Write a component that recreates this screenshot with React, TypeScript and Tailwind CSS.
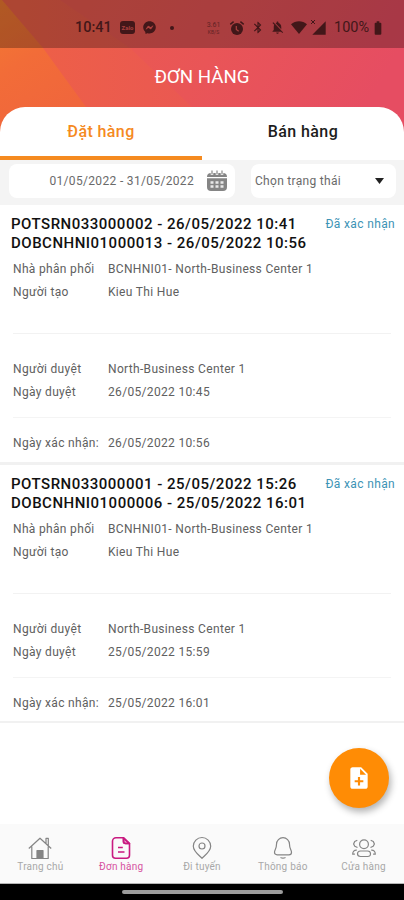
import type { ReactNode } from "react";
import {
  MdBatteryFull,
  MdBluetooth,
  MdNoteAdd,
  MdNotificationsOff,
  MdSignalCellular4Bar,
} from "react-icons/md";
import { FaFacebookMessenger } from "react-icons/fa";

type Order = {
  code: string;
  createdAt: string;
  deliveryCode: string;
  confirmedAt: string;
  distributor: string;
  creator: string;
  approver: string;
  approvedAt: string;
};

const ORDERS: Order[] = [
  {
    code: "POTSRN033000002",
    createdAt: "26/05/2022 10:41",
    deliveryCode: "DOBCNHNI01000013",
    confirmedAt: "26/05/2022 10:56",
    distributor: "BCNHNI01- North-Business Center 1",
    creator: "Kieu Thi Hue",
    approver: "North-Business Center 1",
    approvedAt: "26/05/2022 10:45",
  },
  {
    code: "POTSRN033000001",
    createdAt: "25/05/2022 15:26",
    deliveryCode: "DOBCNHNI01000006",
    confirmedAt: "25/05/2022 16:01",
    distributor: "BCNHNI01- North-Business Center 1",
    creator: "Kieu Thi Hue",
    approver: "North-Business Center 1",
    approvedAt: "25/05/2022 15:59",
  },
];

function AlarmIcon() {
  return (
    <svg viewBox="0 0 16 16" className="ml-[7px] h-4 w-4" fill="none" stroke="currentColor">
      <circle cx="8" cy="9" r="6" fill="currentColor" stroke="none" />
      <path d="M1.3 4.3 4.6 1.6M14.7 4.3l-3.3-2.7" strokeWidth="1.5" />
      <path d="M7.3 6v3.4l2.4 1.8" stroke="#a9403f" strokeWidth="1.2" />
    </svg>
  );
}

function StatusBar() {
  return (
    <div className="flex h-12 items-center bg-black/27 pt-[7px] pl-[75px] text-[15px] text-[#421719]">
      <span className="w-[45px] text-[14.5px] font-medium">10:41</span>
      <span className="flex h-[13px] w-[15px] items-center justify-center rounded-[3px] bg-[#421719] text-[6px] font-bold text-[#a9403f]">
        Zalo
      </span>
      <FaFacebookMessenger className="ml-2 h-[13px] w-[13px]" />
      <span className="ml-[14px] h-1 w-1 rounded-full bg-[#421719]" />
      <span className="ml-[31px] flex w-[17px] flex-col items-center text-[7px] opacity-70">
        <span className="leading-[8px]">3.61</span>
        <span className="text-[5px] leading-[6px]">KB/S</span>
      </span>
      <AlarmIcon />
      <MdBluetooth className="ml-[6px] h-[15px] w-[14px]" />
      <MdNotificationsOff className="ml-[5px] h-[15px] w-[15px]" />
      <svg viewBox="0 0 16 13" className="ml-[6px] h-[13px] w-4 fill-current">
        <path d="M0 3.2C4.5-.7 11.5-.7 16 3.2L8 13Z" />
      </svg>
      <span className="relative ml-1">
        <MdSignalCellular4Bar className="h-4 w-4" />
        <svg viewBox="0 0 4 4" className="absolute top-0 left-0 h-1 w-1 stroke-current">
          <path d="M0 0l4 4M4 0L0 4" />
        </svg>
      </span>
      <span className="ml-[7px] w-[36px] text-[14.5px]">100%</span>
      <MdBatteryFull className="h-4 w-4" />
    </div>
  );
}

function HeaderBackdrop() {
  return (
    <svg viewBox="0 0 404 136" preserveAspectRatio="none" className="absolute inset-0 -z-10 h-[136px] w-full">
      <defs>
        <linearGradient id="base" gradientUnits="userSpaceOnUse" x1="90" y1="0" x2="340" y2="150">
          <stop offset="0" stopColor="#eb5a4f" />
          <stop offset="0.45" stopColor="#e95557" />
          <stop offset="1" stopColor="#e64d62" />
        </linearGradient>
        <linearGradient id="band" x1="0" y1="0" x2="1" y2="0">
          <stop offset="0" stopColor="#ee6145" />
          <stop offset="1" stopColor="#ea5852" />
        </linearGradient>
        <linearGradient id="corner" gradientUnits="userSpaceOnUse" x1="0" y1="0" x2="70" y2="107">
          <stop offset="0" stopColor="#f37b31" />
          <stop offset="0.5" stopColor="#f26c38" />
          <stop offset="1" stopColor="#f0663c" />
        </linearGradient>
      </defs>
      <rect width="404" height="136" fill="url(#base)" />
      <path d="M0 0H60L130 48L192 107V136H0Z" fill="url(#band)" />
      <path d="M0 0H2L43 48L86 107V136H0Z" fill="url(#corner)" />
    </svg>
  );
}

function Field({ label, children }: { label: string; children: ReactNode }) {
  return (
    <div className="flex h-[23.5px] items-center text-[12px] tracking-[0.33px] whitespace-nowrap text-[#606060]">
      <span className="w-[95px] shrink-0">{label}</span>
      <span>{children}</span>
    </div>
  );
}

function OrderCard({ order }: { order: Order }) {
  return (
    <article className="h-[260px] border-b-[3px] border-[#f1f1f1] bg-white pt-[10px] last:h-[258px] last:border-b-2">
      <div className="flex justify-between pr-[9px] pl-[11px]">
        <h2 className="text-[15px] leading-[19px] font-medium tracking-[0.5px] whitespace-nowrap text-[#111]">
          {order.code} - {order.createdAt}
          <br />
          {order.deliveryCode} - {order.confirmedAt}
        </h2>
        <span className="text-[12px] leading-[19px] tracking-[0.35px] whitespace-nowrap text-[#3c93b5]">Đã xác nhận</span>
      </div>
      <div className="mt-1 px-[13px]">
        <Field label="Nhà phân phối">{order.distributor}</Field>
        <Field label="Người tạo">{order.creator}</Field>
        <div className="mt-[29px] mb-[23px] h-px bg-[#f2f2f2]" />
        <Field label="Người duyệt">{order.approver}</Field>
        <Field label="Ngày duyệt">{order.approvedAt}</Field>
        <div className="mt-[13px] mb-[13px] h-px bg-[#f4f4f4]" />
        <Field label="Ngày xác nhận:">{order.confirmedAt}</Field>
      </div>
    </article>
  );
}

function CalendarIcon() {
  return (
    <svg viewBox="0 0 20 22" className="h-[22px] w-5">
      <path d="M4 3h12a4 4 0 0 1 4 4H0a4 4 0 0 1 4-4Z" fill="#858585" />
      <path d="M0 8.3h20V17a4 4 0 0 1-4 4H4a4 4 0 0 1-4-4Z" fill="#858585" />
      <path d="M5 .8v4M10 .8v4M15 .8v4" stroke="#fff" strokeWidth="2.6" />
      <path d="M5 .6v3.4M10 .6v3.4M15 .6v3.4" stroke="#858585" strokeWidth="1.2" />
      <path d="M3.5 12.5h13M3.5 16.5h13" stroke="#e9e9e9" strokeWidth="2.3" strokeDasharray="3 2" />
    </svg>
  );
}

const NAV_ITEMS = [
  {
    label: "Trang chủ",
    icon: (
      <>
        <path d="M.8 12.5 12 2.2l11.2 10.3M18 7.5V2.3h2.3v7.4M3.8 10.5V22.5h16.4V10.5" />
        <path d="M9 22.3v-7.8h6v7.8Z" fill="currentColor" />
      </>
    ),
  },
  {
    label: "Đơn hàng",
    icon: (
      <>
        <path d="M14.5 1.8H7a3.5 3.5 0 0 0-3.5 3.5v13.9A3 3 0 0 0 6.500 22.200h11a3 3 0 0 0 3-3V7.500ZM14.500 1.800v3.700a2 2 0 0 0 2 2h4M9 11.500h4.800M9 16h6.500" />
        <path d="m14.500 1.800 6 5.700h-4a2 2 0 0 1-2-2Z" fillOpacity="0.35" fill="currentColor" />
      </>
    ),
    active: true,
  },
  {
    label: "Đi tuyến",
    icon: (
      <>
        <path d="M12 22.300C8.300 18.700 3.300 15 3.300 10.200a8.700 8.700 0 0 1 17.400 0c0 4.800-5 8.500-8.700 12.100Z" />
        <circle cx="12" cy="10" r="3" />
      </>
    ),
  },
  {
    label: "Thông báo",
    icon: (
      <>
        <path d="M5.500 8.200a6.500 6.500 0 0 1 13 0c0 5 2 5.700 2 8 0 1.800-1.100 2.600-2.600 2.600H6.100c-1.500 0-2.600-.8-2.600-2.600 0-2.300 2-3 2-8Z" />
        <path d="M9.500 21.500q2.500 1.200 5 0" />
      </>
    ),
  },
  {
    label: "Cửa hàng",
    icon: (
      <>
        <circle cx="12" cy="8.300" r="4.400" />
        <path d="M8.500 15h7q3 0 3 2.800t-3 2.700h-7q-3 0-3-2.700T8.500 15Z" />
        <path d="M5.300 4.300 2.700 5.500 1.600 8l1.200 2.300 2.700 1.200M18.700 4.300l2.600 1.200L22.400 8l-1.200 2.300-2.700 1.200" />
        <path d="M4.800 14.200Q.7 14 .7 18.200h2.200M19.200 14.200q4.100-.2 4.100 4h-2.200" />
      </>
    ),
  },
];

function BottomNav() {
  return (
    <nav className="grid h-[60px] grid-cols-5 border-b border-[#b5b5b5] bg-[#fafafa]">
      {NAV_ITEMS.map((item) => (
        <div
          key={item.label}
          className={`flex flex-col items-center pt-[11.5px] ${item.active ? "text-[#c91a80]" : "text-[#858585]"}`}
        >
          <svg
            viewBox="0 0 24 24"
            fill="none"
            stroke="currentColor"
            strokeWidth={item.active ? 1.6 : 1.2}
            strokeLinejoin="round"
            className="h-6 w-6"
          >
            {item.icon}
          </svg>
          <span className={`text-[10px] leading-[14px] tracking-[0.22px] ${item.active ? "text-[#d652a0]" : "text-[#a8a8a8]"}`}>
            {item.label}
          </span>
        </div>
      ))}
    </nav>
  );
}

export default function App() {
  return (
    <div className="relative isolate flex h-[900px] w-[404px] flex-col overflow-hidden font-[Roboto,sans-serif]">
      <HeaderBackdrop />
      <StatusBar />
      <header className="flex h-[59px] items-center justify-center text-[18.7px] text-white">ĐƠN HÀNG</header>

      <main className="flex-1 overflow-hidden rounded-t-[25px] bg-white">
        <div className="grid h-[53px] grid-cols-2 text-center text-[16px] leading-[50px] font-medium tracking-[0.4px]">
          <div className="h-[53px] border-b-[4px] border-[#f58a1f] text-[#f58a1f]">Đặt hàng</div>
          <div className="text-[#1c1c1c]">Bán hàng</div>
        </div>

        <div className="flex h-[45px] gap-4 bg-[#f4f4f4] pt-1 pr-2 pl-[9px]">
          <div className="flex h-[34px] w-[226px] items-center justify-end rounded-lg bg-white pr-[8px] text-[12px] text-[#6a6a6a]">
            <span className="mr-[13px] tracking-[0.33px] whitespace-nowrap">01/05/2022 - 31/05/2022</span>
            <CalendarIcon />
          </div>
          <div className="flex h-[34px] flex-1 items-center justify-between rounded-lg bg-white pr-[12px] pl-1 text-[12px] tracking-[0.3px] text-[#6a6a6a]">
            Chọn trạng thái
            <svg viewBox="0 0 9 6" className="h-[6px] w-[9px] fill-[#222]">
              <path d="M0 0h9L4.500 6Z" />
            </svg>
          </div>
        </div>

        {ORDERS.map((order) => (
          <OrderCard key={order.code} order={order} />
        ))}
      </main>

      <button
        type="button"
        aria-label="Tạo đơn hàng"
        className="absolute top-[748px] left-[329px] flex h-[60px] w-[60px] items-center justify-center rounded-full bg-[#ff8c05] text-white shadow-[2px_4px_7px_rgba(0,0,0,0.3)]"
      >
        <MdNoteAdd className="h-[26px] w-[26px]" />
      </button>

      <BottomNav />
      <div className="flex h-4 justify-center bg-black pt-[6px]">
        <div className="h-1 w-[161px] rounded-full bg-[#9c9c9c]" />
      </div>
    </div>
  );
}
